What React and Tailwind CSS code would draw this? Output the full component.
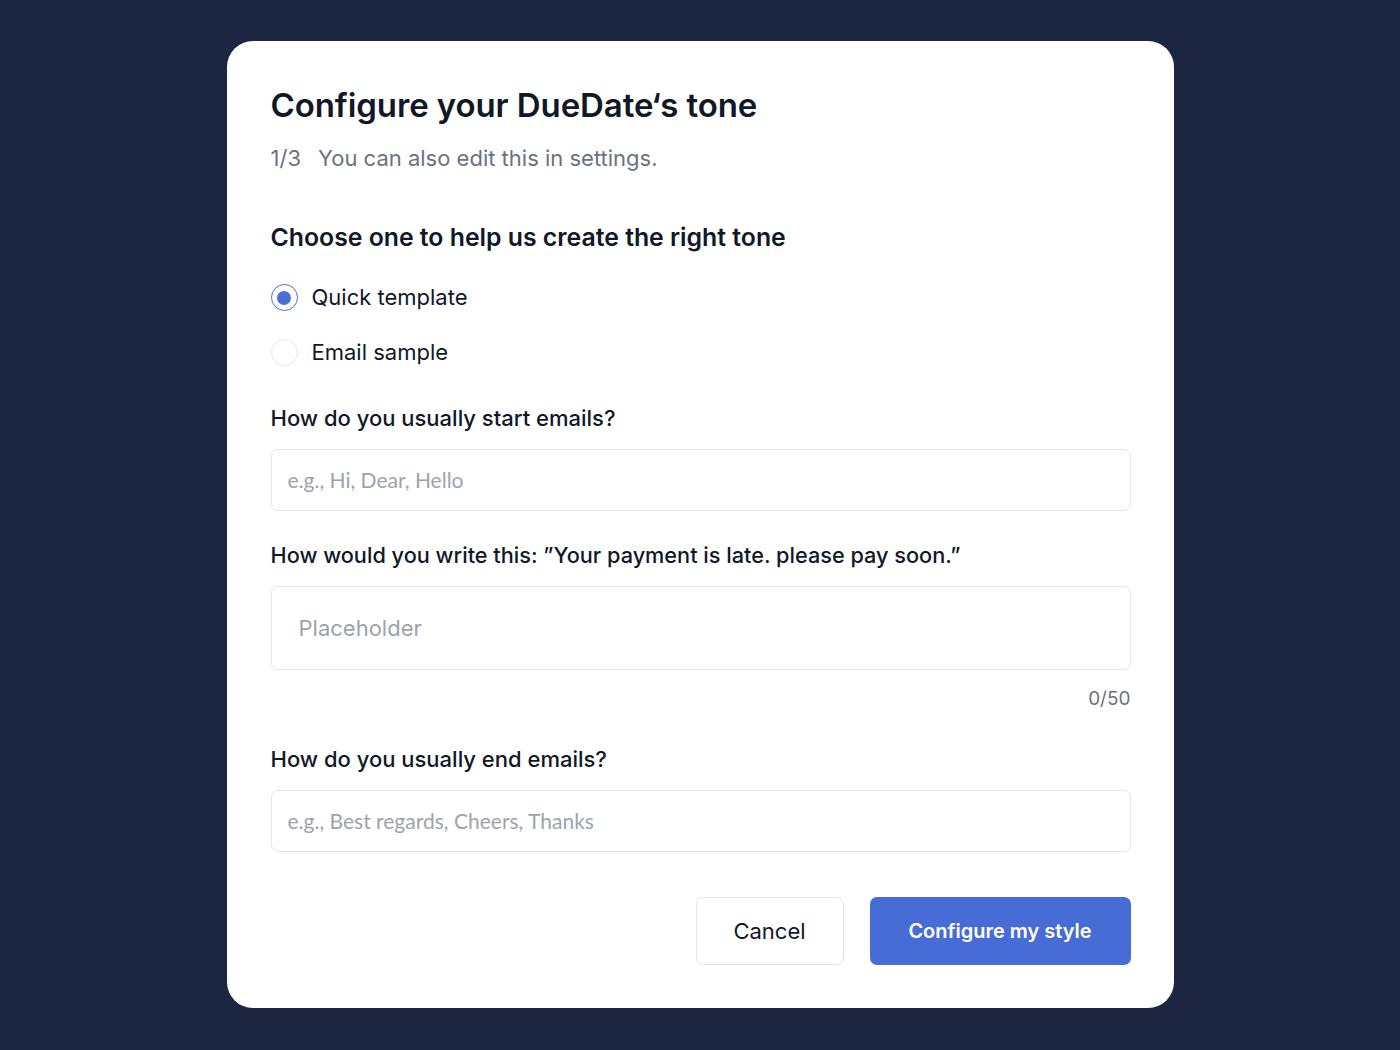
export default function App() {
  return (
    <div className="min-h-screen w-full bg-[#1d2640] pt-[41px] flex justify-center" style={{ fontFamily: 'Inter, "Liberation Sans", sans-serif' }}>
      <div className="w-[947px] h-[967px] bg-white rounded-[26px] pl-[44px] pr-[43px] pt-[41px]">
        <h1 className="text-[33px] font-semibold text-[#111827] tracking-[-0.1px] leading-[46px]">Configure your DueDate‘s tone</h1>
        <p className="mt-[15px] text-[22px] text-[#6b7280] leading-[30px]">
          <span>1/3</span><span className="ml-[17px]">You can also edit this in settings.</span>
        </p>

        <h2 className="mt-[48px] text-[24.8px] font-semibold text-[#111827] leading-[32px]">Choose one to help us create the right tone</h2>

        <div className="mt-[31px] flex flex-col gap-[28px]">
          <label className="flex items-center gap-[14px]">
            <span className="w-[27px] h-[27px] rounded-full border-[1.5px] border-[#4a6fd6] flex items-center justify-center">
              <span className="w-[14px] h-[14px] rounded-full bg-[#4a6fd6]" />
            </span>
            <span className="text-[22px] text-[#111827] leading-[27px]">Quick template</span>
          </label>
          <label className="flex items-center gap-[14px]">
            <span className="w-[27px] h-[27px] rounded-full border-[1.5px] border-[#e5e7eb]" />
            <span className="text-[22px] text-[#111827] leading-[27px]">Email sample</span>
          </label>
        </div>

        <div className="mt-[37px] text-[22px] font-medium text-[#111827] leading-[30px]">How do you usually start emails?</div>
        <div className="mt-[16px] h-[62px] border border-[#e3e5e8] rounded-[7px] flex items-center px-[16px]">
          <span className="text-[21px] text-[#9ca3af]" style={{ fontFamily: 'Lato, sans-serif' }}>e.g., Hi, Dear, Hello</span>
        </div>

        <div className="mt-[29px] text-[21.7px] font-medium text-[#111827] leading-[30px]">How would you write this: ”Your payment is late. please pay soon.”</div>
        <div className="mt-[16px] h-[84px] border border-[#e3e5e8] rounded-[7px] flex items-center px-[27px]">
          <span className="text-[22px] text-[#9ca3af]">Placeholder</span>
        </div>
        <div className="mt-[17px] text-right text-[19px] text-[#6b7280] leading-[24px]">0/50</div>

        <div className="mt-[33px] text-[22px] font-medium text-[#111827] leading-[30px]">How do you usually end emails?</div>
        <div className="mt-[16px] h-[62px] border border-[#e3e5e8] rounded-[7px] flex items-center px-[16px]">
          <span className="text-[21px] text-[#9ca3af]" style={{ fontFamily: 'Lato, sans-serif' }}>e.g., Best regards, Cheers, Thanks</span>
        </div>

        <div className="mt-[45px] flex justify-end gap-[26px]">
          <button className="w-[148px] h-[68px] border border-[#e3e5e8] rounded-[7px] bg-white text-[22px] text-[#111827]">Cancel</button>
          <button className="w-[261px] h-[68px] rounded-[7px] bg-[#476cd6] text-[20px] font-semibold text-white">Configure my style</button>
        </div>
      </div>
    </div>
  )
}
